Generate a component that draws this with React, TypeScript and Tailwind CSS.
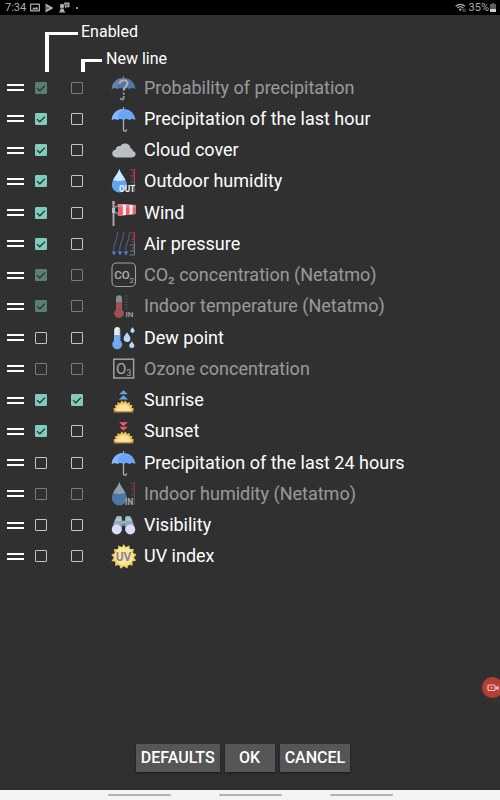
import { useState } from "react";
import type { ReactNode } from "react";

interface WeatherItem {
  id: string;
  label: string;
  icon: ReactNode;
  enabled: boolean;
  newLine: boolean;
  available: boolean;
}

function Icon({ children }: { children: ReactNode }) {
  return (
    <svg viewBox="0 0 26 26" className="w-[26px] h-[26px] shrink-0" fill="none" aria-hidden="true">
      {children}
    </svg>
  );
}

function UmbrellaIcon({ unknown = false }: { unknown?: boolean }) {
  return (
    <Icon>
      <path d="M12.500 1v3" stroke="#a9b0b8" strokeWidth="1.200" />
      <path d="M.7 14.200C1.200 7.500 6 3 12.500 3s11.500 4.500 12 11.200c-2.200-1.500-4.600-1.500-6 0-1.800-1.500-4.200-1.500-6 0-1.800-1.500-4.200-1.500-6 0-1.500-1.500-3.800-1.500-5.800 0z" fill="#6ea4f4" />
      <path d="M12.500 3C8.500 5 6.600 9.500 6.500 14.200 4.800 12.700 2.700 12.700.7 14.200 1.200 7.500 6 3 12.500 3z" fill="#85b5fa" />
      {unknown ? (
        <>
          <path d="M8.800 9c0-4.800 7.600-4.800 7.600-.8 0 3.300-3.700 3.300-3.700 7.300" stroke="#fff" strokeWidth="2.200" />
          <path d="M12.700 17.500v2.300M12.700 21v1.800c0 2.400-2.900 2.400-2.900.2" stroke="#e2e5e9" strokeWidth="1.700" />
        </>
      ) : (
        <path d="M12.500 13.500v10.200c0 2.200-2.800 2-2.800 0" transform="matrix(-1 0 0 1 25 0)" stroke="#a9b0b8" strokeWidth="1.300" strokeLinecap="round" />
      )}
    </Icon>
  );
}

function CloudIcon() {
  return (
    <Icon>
      <path d="M6 20.500c-3 0-4.800-1.700-4.800-4 0-2.200 1.600-3.700 3.600-3.900 0-2.600 2.200-4 4.500-3.500C10.500 7.300 12 6.500 14 6.500c3 0 5.300 1.900 5.600 4.700 1.700.4 2.300 1.500 2.200 2.700 1.700.4 2.800 1.500 2.800 3.100 0 2-1.700 3.500-4.200 3.500z" fill="#b9c0c5" />
    </Icon>
  );
}

function HumidityIcon({ place }: { place: "OUT" | "IN" }) {
  return (
    <Icon>
      <path d="M8.300 1C7.300 5 .8 11 .8 17a7.500 7.500 0 0 0 15 0C15.800 11 9.300 5 8.300 1z" fill="#62a5ee" />
      <path d="M8.300 1C7.300 5 4 8.500 2.200 12c4 1.500 8 1.200 12.200-.2C12.500 8.300 9.300 5 8.300 1z" fill="#cdeafa" />
      <path d="M23.500 1v12M19.500 2h4M21 5h2.500M19.500 8h4M21 11h2.500" stroke="#b83c48" strokeWidth="1" />
      <path d="M23.500 13v11M20 14h3.500M21 17h2.500" stroke="#596b94" strokeWidth="1" />
      <text x={place === "OUT" ? 8 : 14} y="23.800" fill="#f5f7fa" fontFamily="Roboto, sans-serif" fontSize="8.200" fontWeight="700">
        {place}
      </text>
    </Icon>
  );
}

function WindIcon() {
  return (
    <Icon>
      <path d="M2.500 3v23" stroke="#a3acb6" strokeWidth="1.900" />
      <circle cx="2.500" cy="2.500" r="1.700" fill="#d8848e" />
      <path d="M3 6.500h5M3 13h5M3.500 9l4-5M3.500 11l4 4" stroke="#8f99a5" strokeWidth=".9" />
      <rect x="1" y="8" width="3" height="5" fill="#b9c1ca" />
      <path d="M7.500 4l17 1v9l-17 2z" fill="#f6e9e6" />
      <path d="M7.500 4l4.300.3v11.200l-4.300.5zM15 4.500l3.500.2v10l-3.500.4zM21.600 4.800l2.900.2v9l-2.900.3z" fill="#ec6067" />
      <path d="M7.500 4l17 1v3l-17-1z" fill="#fff" opacity=".2" />
    </Icon>
  );
}

function PressureIcon() {
  return (
    <Icon>
      <path d="M7 1c-1 3-.8 5-1.800 8S1.500 17 3 22M13 1c-1 3-.8 5-1.800 8s-3.700 8-2.200 13M19 1c-1 3-.8 5-1.800 8s-3.700 8-2.200 13" stroke="#4b618a" strokeWidth="1.100" />
      <path d="M.7 20.500h4.600L3 24.500zM6.700 20.500h4.600L9 24.500zM12.700 20.500h4.600l-2.300 4z" fill="#5b7bd0" />
      <path d="M23.500 1v11M20 2h3.500M21 5h2.500M20 8h3.500M21 11h2.500" stroke="#a9414c" strokeWidth="1" />
      <path d="M23.500 12v12M19 14h4.500M21 17h2.500M19 20h4.500M18.500 24h5" stroke="#767b90" strokeWidth="1" />
    </Icon>
  );
}

function Co2Icon() {
  return (
    <Icon>
      <rect x="1" y="1" width="23.500" height="23.500" rx="4.500" stroke="#ededed" strokeWidth="1.100" />
      <text x="3.200" y="17" fill="#fff" fontFamily="Roboto, sans-serif" fontSize="11.500" fontWeight="500">
        CO
      </text>
      <text x="18.500" y="20.500" fill="#fff" fontFamily="Roboto, sans-serif" fontSize="8">
        2
      </text>
    </Icon>
  );
}

function IndoorTemperatureIcon() {
  return (
    <Icon>
      <path d="M5 5.200a3 3 0 0 1 6 0V16H5z" fill="#b5cfce" />
      <path d="M5.200 9h5.600v7.200a4.800 4.800 0 1 1-5.600 0z" fill="#ef626d" />
      <path d="M13.500 3h4M13.500 6h3M13.500 9h4M13.500 12h3M13.500 15h4" stroke="#5b6878" strokeWidth="1" />
      <text x="14.500" y="23.800" fill="#eee" fontFamily="Roboto, sans-serif" fontSize="8" fontWeight="500">
        IN
      </text>
    </Icon>
  );
}

function DewPointIcon() {
  return (
    <Icon>
      <path d="M3.200 5a3 3 0 0 1 6 0v11h-6z" fill="#e6eff8" />
      <path d="M3.200 10h6v5.600a4.900 4.900 0 1 1-6 0z" fill="#72a9f5" />
      <path d="M7.500 5h1.700M7.500 8h1.700" stroke="#8f9daf" strokeWidth="1" />
      <path d="M16 7c-.5 2-3.400 4-3.400 6.500a3.400 3.400 0 0 0 6.800 0C19.400 11 16.500 9 16 7zM21.500 2c-.4 1.400-2.100 2.300-2.100 3.800a2.100 2.100 0 0 0 4.200 0c0-1.500-1.700-2.400-2.100-3.800zM20.800 16c-.4 1.600-2.500 2.700-2.500 4.600a2.500 2.500 0 0 0 5 0c0-1.900-2.100-3-2.500-4.600z" fill="#b4dcfa" />
    </Icon>
  );
}

function OzoneIcon() {
  return (
    <Icon>
      <rect x="2.800" y="3.200" width="19.800" height="18.800" stroke="#ededed" strokeWidth="1.500" />
      <text x="5" y="18" fill="#f5f5f5" fontFamily="Roboto, sans-serif" fontSize="15">
        O
      </text>
      <text x="15.500" y="20" fill="#f5f5f5" fontFamily="Roboto, sans-serif" fontSize="8.500">
        3
      </text>
    </Icon>
  );
}

function HorizonIcon({ rising }: { rising: boolean }) {
  return (
    <Icon>
      <path d="M3.400 24.500l-1-3 2.300-.7-.9-2.900 2.500.1.300-3 2.500 1.200 1.500-2.700 1.900 1.900 2-1.900 1.500 2.600 2.600-1 .3 2.900 2.600-.1-.9 2.800 2.300.8-1 3z" fill="#f1bd57" />
      <path d="M5 24.500a7.500 7.500 0 0 1 15 0z" fill="#ffe199" />
      <path d="M2.500 25h20" stroke="#a68852" strokeWidth="1" />
      {rising ? (
        <path d="M12.500 3.300l4.300 4H8.200zM12.500 8.300l4.600 4.200H7.900z" fill="#65a3f0" />
      ) : (
        <path d="M8 4.300h9l-4.500 4zM8.300 8.800h8.400l-4.200 4z" fill="#ec5962" />
      )}
    </Icon>
  );
}

function BinocularsIcon() {
  return (
    <Icon>
      <path d="M9 8.500h7v5.500H9z" fill="#6d8494" />
      <path d="M10 9.500h5v2h-5z" fill="#a5bfcc" />
      <path d="M5 5.500l1-1.500h4l.8 1.500v13.500H1.300c0-5 1.800-9.500 3.700-13.500zM20 5.500L19 4h-4l-.8 1.500v13.500h9.500c0-5-1.800-9.500-3.700-13.500z" fill="#8cabbb" />
      <path d="M5.500 5.500h5v3.500H4.300zM14.500 5.500h5L20.700 9h-6.200z" fill="#a9c4d2" />
      <circle cx="5.700" cy="17.500" r="4.900" fill="#dddcf7" />
      <circle cx="19.300" cy="17.500" r="4.900" fill="#dddcf7" />
    </Icon>
  );
}

function UvIcon() {
  return (
    <Icon>
      <path d="M12.700 1l2.200 3.200L18.200 2.200l.7 3.900 4-.2-1 3.800 3.600 1.800-2.600 2.900 2.300 3.200-3.800 1 .3 4-3.900-.6-1.700 3.500-3.200-2.300-3.100 2.500-1.800-3.600-3.900.7.200-4-3.800-.9 2.300-3.300L.3 11.700l3.600-1.800-1.100-3.800 4 .1.700-3.900 3.400 2z" fill="#f0cd68" />
      <circle cx="12.900" cy="13" r="9.200" fill="#fde696" />
      <text x="4.700" y="17.500" fill="#8c82a0" fontFamily="Roboto, sans-serif" fontSize="12" fontWeight="700">
        UV
      </text>
    </Icon>
  );
}

const initialItems: WeatherItem[] = [
  { id: "pop", label: "Probability of precipitation", icon: <UmbrellaIcon unknown />, enabled: true, newLine: false, available: false },
  { id: "rain1h", label: "Precipitation of the last hour", icon: <UmbrellaIcon />, enabled: true, newLine: false, available: true },
  { id: "clouds", label: "Cloud cover", icon: <CloudIcon />, enabled: true, newLine: false, available: true },
  { id: "humidity", label: "Outdoor humidity", icon: <HumidityIcon place="OUT" />, enabled: true, newLine: false, available: true },
  { id: "wind", label: "Wind", icon: <WindIcon />, enabled: true, newLine: false, available: true },
  { id: "pressure", label: "Air pressure", icon: <PressureIcon />, enabled: true, newLine: false, available: true },
  { id: "co2", label: "CO₂ concentration (Netatmo)", icon: <Co2Icon />, enabled: true, newLine: false, available: false },
  { id: "indoorTemp", label: "Indoor temperature (Netatmo)", icon: <IndoorTemperatureIcon />, enabled: true, newLine: false, available: false },
  { id: "dewPoint", label: "Dew point", icon: <DewPointIcon />, enabled: false, newLine: false, available: true },
  { id: "ozone", label: "Ozone concentration", icon: <OzoneIcon />, enabled: false, newLine: false, available: false },
  { id: "sunrise", label: "Sunrise", icon: <HorizonIcon rising />, enabled: true, newLine: true, available: true },
  { id: "sunset", label: "Sunset", icon: <HorizonIcon rising={false} />, enabled: true, newLine: false, available: true },
  { id: "rain24h", label: "Precipitation of the last 24 hours", icon: <UmbrellaIcon />, enabled: false, newLine: false, available: true },
  { id: "indoorHumidity", label: "Indoor humidity (Netatmo)", icon: <HumidityIcon place="IN" />, enabled: false, newLine: false, available: false },
  { id: "visibility", label: "Visibility", icon: <BinocularsIcon />, enabled: false, newLine: false, available: true },
  { id: "uv", label: "UV index", icon: <UvIcon />, enabled: false, newLine: false, available: true },
];

interface CheckboxProps {
  id: string;
  label: string;
  checked: boolean;
  disabled: boolean;
  onChange: () => void;
}

function Checkbox({ id, label, checked, disabled, onChange }: CheckboxProps) {
  return (
    <span className={`grid shrink-0 ${disabled ? "opacity-50" : ""}`}>
      <input
        id={id}
        type="checkbox"
        aria-label={label}
        checked={checked}
        disabled={disabled}
        onChange={onChange}
        className="peer col-start-1 row-start-1 appearance-none w-3 h-3 rounded-[1px] border border-[#c4c4c4] checked:border-[#80cbbc] checked:bg-[#80cbbc]"
      />
      <svg
        viewBox="0 0 12 12"
        className="hidden peer-checked:block col-start-1 row-start-1 w-3 h-3 pointer-events-none"
        fill="none"
        aria-hidden="true"
      >
        <path d="M2 6.100l2.800 2.700L10 3.600" stroke="#26332f" strokeWidth="1.300" />
      </svg>
    </span>
  );
}

function StatusBar() {
  return (
    <div className="h-[15px] shrink-0 bg-black text-[#b0b0b0] text-[11px] leading-[15px] flex items-center justify-between pl-[5px] pr-1">
      <div className="flex items-center gap-1">
        <span>7:34</span>
        <svg viewBox="0 0 10 9" className="w-[10px] h-[9px]" aria-hidden="true">
          <path fillRule="evenodd" d="M1 .5h8c.5 0 1 .4 1 1v6c0 .6-.5 1-1 1H1c-.6 0-1-.4-1-1v-6c0-.6.4-1 1-1zm.2 1.200v5.600h7.600V1.700zM2 6.500l2-2.600 1.400 1.500L6.800 3.500 8.300 6.500z" fill="currentColor" />
        </svg>
        <svg viewBox="0 0 10 10" className="w-[10px] h-[10px]" aria-hidden="true">
          <path d="M1.500 .5l8 4.500-8 4.500z" fill="currentColor" />
          <path d="M1 3.500l4 1.500-4 1.500" stroke="#222" strokeWidth=".7" fill="none" />
        </svg>
        <svg viewBox="0 0 12 11" className="w-[12px] h-[11px]" aria-hidden="true">
          <circle cx="4" cy="4" r="2.200" fill="currentColor" />
          <path d="M1 10.500h6.500L6 8.500l-.5-2h-3l-.4 2zM6 .5h5.500v4.800H8.200L7 6.500V5z" fill="currentColor" />
          <path d="M7.300 2.200h3M7.300 3.700h3" stroke="#000" strokeWidth=".5" />
        </svg>
        <span className="w-[2px] h-[2px] rounded-full bg-[#c8c8c8] ml-[2px]" />
      </div>
      <div className="flex items-center gap-[3px]">
        <svg viewBox="0 0 11 9" className="w-[11px] h-[9px]" fill="none" aria-hidden="true">
          <path d="M.7 3.200c2.600-2.500 6.600-2.500 9.200 0M2.300 5c1.800-1.700 4.200-1.700 6 0" stroke="currentColor" strokeWidth="1.200" />
          <path d="M3.700 6.200c1-.8 2.200-.8 3.200 0L5.300 8z" fill="currentColor" />
          <path d="M8.200 5.500V9M10 5.500V9" stroke="#888" strokeWidth=".8" />
        </svg>
        <div className="flex items-center">
          <span>35%</span>
          <svg viewBox="0 0 6 9" className="w-[6px] h-[9px] ml-px" aria-hidden="true">
            <path d="M2 0h2v1h2v8H0V1h2z" fill="#5c5c5c" />
            <path d="M0 6h6v3H0z" fill="#d0d0d0" />
          </svg>
        </div>
      </div>
    </div>
  );
}

export default function App() {
  const [items, setItems] = useState<WeatherItem[]>(initialItems);

  const toggle = (id: string, key: "enabled" | "newLine") => {
    setItems(items.map((item) => (item.id === id ? { ...item, [key]: !item[key] } : item)));
  };

  const buttonClass =
    "h-7 px-[5px] bg-[#565656] text-white text-base leading-6 font-medium text-center shadow-[0_1px_2px_rgba(0,0,0,0.5)]";

  return (
    <div className="relative min-h-screen overflow-hidden bg-[#303030] text-white font-[Roboto,sans-serif] flex flex-col">
      <StatusBar />

      <main className="flex-1 flex flex-col">
        {/* Column callouts */}
        <div className="flex items-end pl-[45px] pt-1">
          <div className="w-[33px] h-10 mr-[3px] border-t-3 border-l-4 border-white" />
          <div>
            <div className="text-base leading-[26px]">Enabled</div>
            <div className="flex items-end gap-1">
              <div className="w-[21px] h-[13px] border-t-3 border-l-4 border-white" />
              <div className="text-base leading-[27px]">New line</div>
            </div>
          </div>
        </div>

        {/* Sortable rows */}
        <ul className="grid auto-rows-fr min-h-125">
          {items.map((item) => (
            <li key={item.id} className="flex items-center pl-[7px]">
              <button type="button" aria-label={`Move ${item.label}`} className="flex flex-col gap-[3px] w-[17px] mr-[11px] cursor-grab">
                <span className="block h-[2px] w-full bg-white" />
                <span className="block h-[2px] w-full bg-white" />
              </button>
              <Checkbox
                id={`${item.id}-enabled`}
                label={`${item.label}: Enabled`}
                checked={item.enabled}
                disabled={!item.available}
                onChange={() => toggle(item.id, "enabled")}
              />
              <span className="w-6" />
              <Checkbox
                id={`${item.id}-newline`}
                label={`${item.label}: New line`}
                checked={item.newLine}
                disabled={!item.available}
                onChange={() => toggle(item.id, "newLine")}
              />
              <label
                htmlFor={`${item.id}-enabled`}
                className="flex items-center gap-[7px] ml-7 text-lg leading-6"
              >
                <span className={item.available ? "" : "opacity-60"}>{item.icon}</span>
                <span className={item.available ? "" : "opacity-50"}>{item.label}</span>
              </label>
            </li>
          ))}
        </ul>

        <div className="mt-auto flex justify-center gap-[5px] pr-3.5 pb-[18px]">
          <button type="button" className={buttonClass}>DEFAULTS</button>
          <button type="button" className={`${buttonClass} min-w-[50px]`}>OK</button>
          <button type="button" className={buttonClass}>CANCEL</button>
        </div>
      </main>

      {/* Screen recorder bubble */}
      <button
        type="button"
        aria-label="Screen recorder"
        className="absolute top-[677px] right-[-3px] w-[21px] h-[21px] rounded-full bg-[#b63d33] flex items-center justify-center"
      >
        <svg viewBox="0 0 12 9" className="w-[12px] h-[9px]" fill="none" aria-hidden="true">
          <rect x="1" y="2" width="7" height="5.500" rx="1" stroke="#e8cdc8" strokeWidth="1.200" />
          <path d="M8.500 4.500l3-2v5l-3-2z" fill="#e8cdc8" />
          <circle cx="4.500" cy="4.700" r="1" fill="#e8cdc8" />
        </svg>
      </button>

      {/* Gesture bar */}
      <nav className="h-[10px] shrink-0 bg-[#f4f4f4] flex items-center justify-center gap-12">
        <span className="w-[63px] h-[2px] rounded-full bg-[#b3b3b3]" />
        <span className="w-[63px] h-[2px] rounded-full bg-[#b3b3b3]" />
        <span className="w-[63px] h-[2px] rounded-full bg-[#b3b3b3]" />
      </nav>
    </div>
  );
}
